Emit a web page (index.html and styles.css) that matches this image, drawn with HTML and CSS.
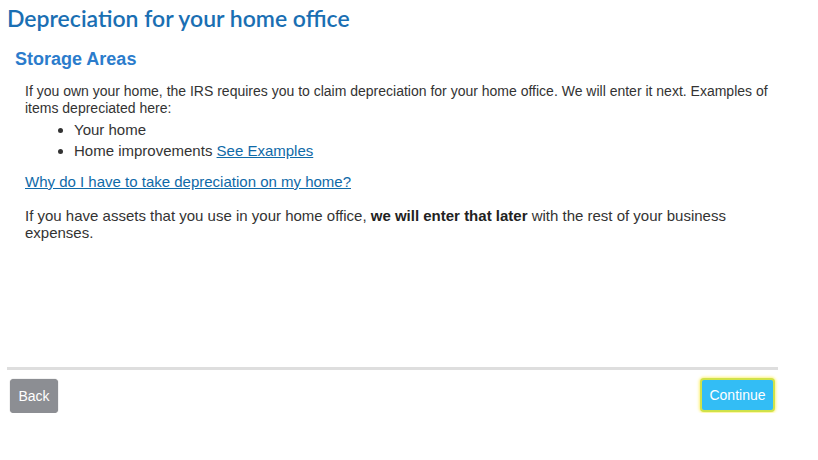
FILE: index.html
```html
<!DOCTYPE html>
<html lang="en">
<head>
    <meta charset="UTF-8">
    <title>Depreciation for your home office</title>
    <link rel="stylesheet" href="styles.css">
</head>
<body>
    <div class="page">
        <h1>Depreciation for your home office</h1>
        <h2>Storage Areas</h2>

        <div class="content">
            <p>If you own your home, the IRS requires you to claim depreciation for your home office. We will enter it next. Examples of items depreciated here:</p>
            <ul>
                <li>Your home</li>
                <li>Home improvements <a href="#">See Examples</a></li>
            </ul>
            <p class="why"><a href="#">Why do I have to take depreciation on my home?</a></p>
            <p class="later">If you have assets that you use in your home office, <strong>we will enter that later</strong> with the rest of your business expenses.</p>
        </div>

        <div class="nav">
            <button class="back">Back</button>
            <button class="continue">Continue</button>
        </div>
    </div>
</body>
</html>
```

FILE: styles.css
```css
body {
    margin: 0;
    font-family: "Liberation Sans", Arial, sans-serif;
    color: #333;
    background: #fff;
}
.page {
    width: 771px;
    padding: 0 0 0 7px;
}
h1 {
    font-family: Lato, "Open Sans", sans-serif;
    font-weight: 600;
    font-size: 23px;
    color: #1a6fb3;
    margin: 0;
    padding-top: 4px;
    line-height: 28px;
}
h2 {
    font-size: 18px;
    font-weight: bold;
    color: #2b7ccc;
    margin: 16px 0 0 8px;
    line-height: 22px;
}
.content {
    padding: 0 0 0 18px;
    font-size: 14px;
    line-height: 17px;
    height: 284px;
}
.content p {
    margin: 13px 0 0;
}
ul {
    margin: 2px 0 0;
    padding-left: 49px;
    font-size: 15px;
    line-height: 21px;
}
a {
    color: #0f6aa8;
    text-decoration: underline;
}
.content p.why {
    margin-top: 12px;
    font-size: 15px;
}
.content p.later {
    margin-top: 17px;
    font-size: 15px;
}
.content strong {
    color: #222;
}
.nav {
    border-top: 3px solid #dedede;
    display: flex;
    justify-content: space-between;
    padding: 8px 3px 0 3px;
}
button {
    font-family: "Liberation Sans", Arial, sans-serif;
    font-size: 14px;
    color: #fff;
    border: none;
    border-radius: 4px;
    height: 34px;
    cursor: pointer;
}
.back {
    background: #8c8e93;
    width: 48px;
    margin-top: 1px;
    box-shadow: 0 0 1px #777;
}
.continue {
    background: #33bdf5;
    width: 75px;
    border: 2px solid #cfe24a;
    box-shadow: 0 0 3px 1px #fff27a;
}
```
